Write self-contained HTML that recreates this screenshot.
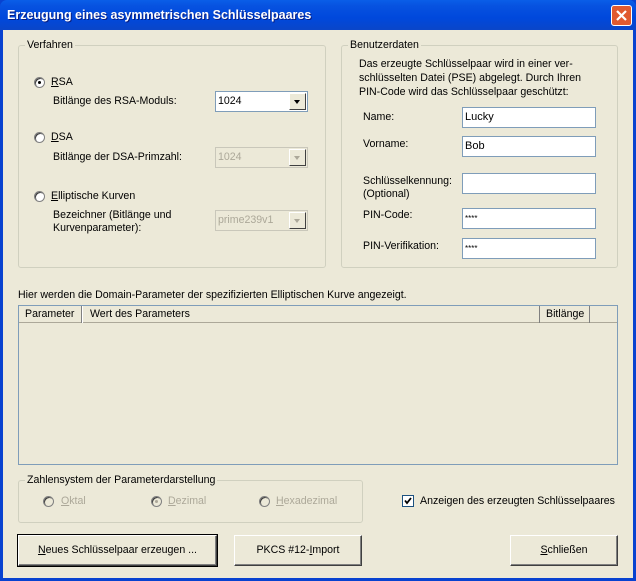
<!DOCTYPE html>
<html><head><meta charset="utf-8"><style>
*{margin:0;padding:0;box-sizing:border-box}
body{width:636px;height:581px;overflow:hidden;background:#0842d0;font-family:"Liberation Sans",sans-serif;font-size:10.6px;color:#000;position:relative}
.a{position:absolute;white-space:nowrap}
#title{left:0;top:0;width:636px;height:30px;background:linear-gradient(#0a5ee8,#0752e0 20%,#0048dc 60%,#0a46c8);border-radius:7px 7px 0 0}
#title span{position:absolute;left:7px;top:8px;color:#fff;font-weight:bold;font-size:12.5px;text-shadow:1px 1px 0 #0a1e80}
#close{left:611px;top:5px;width:21px;height:21px;border:1px solid #fff;border-radius:3px;background:#e05a30}
#client{left:3px;top:30px;width:630px;height:548px;background:#ece9d8}
.grp{position:absolute;border:1px solid #d0d0bf;border-radius:3px}
.grp .lg{position:absolute;top:-7px;left:6px;background:#ece9d8;padding:0 2px;color:#000}
.edit{position:absolute;height:21px;background:#fff;border:1px solid #7f9db9;padding:3px 2px 0;font-size:11px}
.combo{position:absolute;height:21px;background:#fff;border:1px solid #7f9db9;padding:3px 2px}
.combo .btn{position:absolute;right:1px;top:1px;width:17px;height:17px;background:#ece9d8;border:1px solid;border-color:#fff #404040 #404040 #fff}
.combo .btn:after{content:"";position:absolute;left:4px;top:6px;border:3.5px solid transparent;border-top:4px solid #000}
.dis{background:#ece9d8;color:#aca899;border-color:#c9c7ba}
.dis .btn:after{border-top-color:#aca899}
.rad{position:absolute;width:11px;height:11px;border-radius:50%;background:#fff;border:1px solid #808080;box-shadow:inset 1px 1px 0 #404040}
.rad.on:after{content:"";position:absolute;left:3px;top:3px;width:3px;height:3px;border-radius:50%;background:#000}
.rad.d{background:#ece9d8}
.rad.d.on:after{background:#aca899}
.btnp{position:absolute;height:31px;background:#ece9d8;border:1px solid;border-color:#fff #404040 #404040 #fff;box-shadow:inset -1px -1px 0 #808080;text-align:center;line-height:28px}
u{text-decoration:underline}
.gray{color:#aca899}
</style></head><body>
<div class="a" id="title"><span>Erzeugung eines asymmetrischen Schlüsselpaares</span></div>
<div class="a" id="close"><svg width="19" height="19" viewBox="0 0 19 19"><path d="M5 5L14 14M14 5L5 14" stroke="#fff" stroke-width="2.2"/></svg></div>
<div class="a" id="client"></div>

<div class="grp" style="left:18px;top:45px;width:308px;height:223px"><span class="lg">Verfahren</span></div>
<div class="rad on" style="left:34px;top:77px"></div><div class="a" style="left:51px;top:76px"><u>R</u>SA</div>
<div class="a" style="left:53px;top:95px">Bitlänge des RSA-Moduls:</div>
<div class="combo" style="left:215px;top:91px;width:93px">1024<div class="btn"></div></div>
<div class="rad" style="left:34px;top:132px"></div><div class="a" style="left:51px;top:131px"><u>D</u>SA</div>
<div class="a" style="left:53px;top:151px">Bitlänge der DSA-Primzahl:</div>
<div class="combo dis" style="left:215px;top:147px;width:93px">1024<div class="btn"></div></div>
<div class="rad" style="left:34px;top:191px"></div><div class="a" style="left:51px;top:190px"><u>E</u>lliptische Kurven</div>
<div class="a" style="left:53px;top:209px;line-height:13px">Bezeichner (Bitlänge und<br>Kurvenparameter):</div>
<div class="combo dis" style="left:215px;top:210px;width:93px">prime239v1<div class="btn"></div></div>

<div class="grp" style="left:341px;top:45px;width:277px;height:223px"><span class="lg">Benutzerdaten</span></div>
<div class="a" style="left:359px;top:57px;line-height:14px">Das erzeugte Schlüsselpaar wird in einer ver-<br>schlüsselten Datei (PSE) abgelegt. Durch Ihren<br>PIN-Code wird das Schlüsselpaar geschützt:</div>
<div class="a" style="left:363px;top:111px">Name:</div><div class="edit" style="left:462px;top:107px;width:134px">Lucky</div>
<div class="a" style="left:363px;top:138px">Vorname:</div><div class="edit" style="left:462px;top:136px;width:134px">Bob</div>
<div class="a" style="left:363px;top:175px;line-height:13px">Schlüsselkennung:<br>(Optional)</div><div class="edit" style="left:462px;top:173px;width:134px"></div>
<div class="a" style="left:363px;top:209px">PIN-Code:</div><div class="edit" style="left:462px;top:208px;width:134px;font-size:8px;padding-top:5px">****</div>
<div class="a" style="left:363px;top:240px">PIN-Verifikation:</div><div class="edit" style="left:462px;top:238px;width:134px;font-size:8px;padding-top:5px">****</div>

<div class="a" style="left:18px;top:289px">Hier werden die Domain-Parameter der spezifizierten Elliptischen Kurve angezeigt.</div>
<div class="a" style="left:18px;top:305px;width:600px;height:160px;border:1px solid #7f9db9;background:#ece9d8"></div>
<div class="a" style="left:19px;top:306px;width:598px;height:17px;background:#ece9d8;border-bottom:1px solid #aca899"></div>
<div class="a" style="left:19px;top:306px;width:63px;height:17px;border-right:1px solid #808080;box-shadow:1px 0 0 #fff;padding:2px 0 0 6px">Parameter</div>
<div class="a" style="left:84px;top:306px;width:456px;height:17px;border-right:1px solid #808080;padding:2px 0 0 6px">Wert des Parameters</div>
<div class="a" style="left:541px;top:306px;width:49px;height:17px;border-right:1px solid #808080;padding:2px 0 0 5px">Bitlänge</div>

<div class="grp" style="left:18px;top:480px;width:345px;height:43px"><span class="lg">Zahlensystem der Parameterdarstellung</span></div>
<div class="rad d" style="left:43px;top:496px"></div><div class="a gray" style="left:61px;top:495px"><u>O</u>ktal</div>
<div class="rad d on" style="left:151px;top:496px"></div><div class="a gray" style="left:168px;top:495px"><u>D</u>ezimal</div>
<div class="rad d" style="left:259px;top:496px"></div><div class="a gray" style="left:276px;top:495px"><u>H</u>exadezimal</div>
<div class="a" style="left:402px;top:495px;width:12px;height:12px;background:#fff;border:1px solid #1c5180"><svg width="10" height="10" viewBox="0 0 10 10" style="position:absolute;left:0;top:0"><path d="M2 4.5L4 7L8 2" stroke="#000" stroke-width="1.8" fill="none"/></svg></div>
<div class="a" style="left:420px;top:495px">Anzeigen des erzeugten Schlüsselpaares</div>

<div class="btnp" style="left:18px;top:535px;width:199px;outline:1px solid #000"><u>N</u>eues Schlüsselpaar erzeugen ...</div>
<div class="btnp" style="left:234px;top:535px;width:128px">PKCS #12-<u>I</u>mport</div>
<div class="btnp" style="left:510px;top:535px;width:108px"><u>S</u>chließen</div>
</body></html>
